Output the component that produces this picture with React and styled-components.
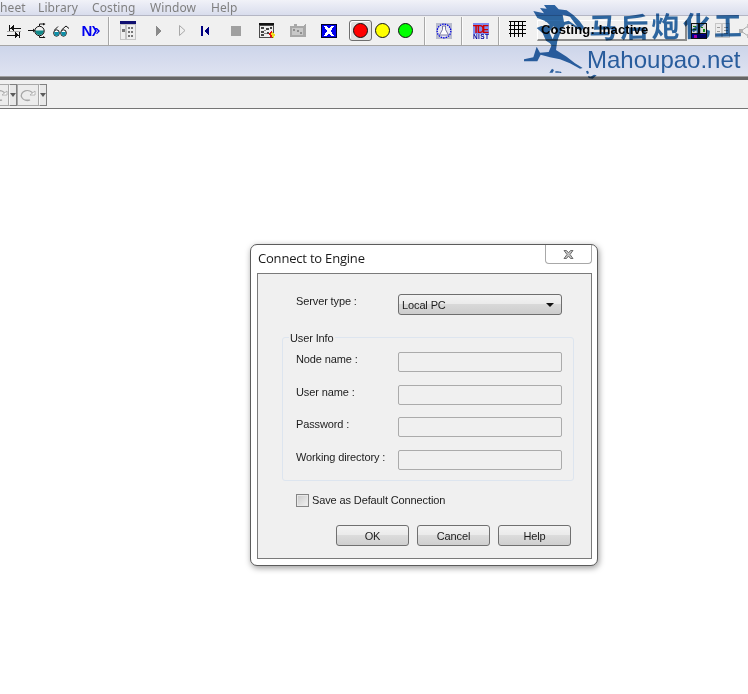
import React from "react";
import styled, { createGlobalStyle } from "styled-components";

const Global = createGlobalStyle`
  html, body { margin: 0; padding: 0; background: #fff; }
  #root { width: 748px; height: 694px; overflow: hidden; position: relative; }
`;

const Page = styled.div`
  width: 748px;
  height: 694px;
  overflow: hidden;
  background: #fff;
  display: flex;
  flex-direction: column;
`;

const MenuBar = styled.div`
  height: 15px;
  flex: none;
  display: flex;
  align-items: center;
  background: linear-gradient(#f1f2f8, #d9dded);
  border-bottom: 1px solid #b4b6c4;
  font: 12px/15px "Noto Sans", sans-serif;
  letter-spacing: 0.1px;
  color: #7f7f7f;
`;
const MenuItem = styled.span`
  flex: none;
  width: ${p => p.$w}px;
  white-space: nowrap;
`;

const Toolbar = styled.div`
  height: 29px;
  flex: none;
  display: flex;
  align-items: stretch;
  background: #f0f0f0;
  border-bottom: 1px solid #a6a6a6;
  padding-left: 2px;
  overflow: hidden;
`;
const Slot = styled.div`
  flex: none;
  width: ${p => p.$w}px;
  padding-bottom: ${p => p.$up || 0}px;
  box-sizing: border-box;
  display: flex;
  align-items: center;
  justify-content: center;
`;
const Sep = styled.div`
  flex: none;
  width: 2px;
  margin: 1px 0 0;
  background: linear-gradient(90deg, #a8a8a8 50%, #fbfbfb 50%);
`;
const PressedButton = styled.div`
  flex: none;
  width: 23px;
  height: 21px;
  margin: 4px 0 0 0;
  box-sizing: border-box;
  border: 1px solid #6e6e6e;
  border-radius: 3px;
  background: #e0e0e0;
  box-shadow: inset 1px 1px 0 #fff;
  display: flex;
  align-items: center;
  justify-content: center;
`;
const CostingBox = styled.div`
  flex: none;
  width: 150px;
  height: 21px;
  margin: 4px 0 0 2px;
  box-sizing: border-box;
  border-right: 2px solid #8c8c8c;
  border-bottom: 2px solid #8c8c8c;
  border-top: 1px solid #fff;
  border-left: 1px solid #fff;
  background: #f0f0f0;
  font: bold 13px/17px "Liberation Sans", sans-serif;
  letter-spacing: 0.15px;
  color: #000;
  padding-left: 3px;
  white-space: nowrap;
`;

const Band = styled.div`
  height: 30px;
  flex: none;
  background: linear-gradient(#cdd5ea, #dfe3f1);
`;
const Rule = styled.div`
  height: 3px;
  flex: none;
  background: #666;
  border-top: 1px solid #a0a0a0;
`;
const SubBar = styled.div`
  height: 28px;
  flex: none;
  background: #f0f0f0;
  border-bottom: 1px solid #757575;
  display: flex;
  align-items: flex-start;
  overflow: hidden;
`;
const SubButton = styled.div`
  flex: none;
  width: ${p => p.$w}px;
  height: 22px;
  margin-top: 4px;
  box-sizing: border-box;
  border: 1px solid #a8a8a8;
  border-left-width: ${p => (p.$clip ? 0 : 1)}px;
  background: #ececec;
  overflow: hidden;
  display: flex;
  align-items: center;
  justify-content: ${p => (p.$clip ? "flex-end" : "center")};
`;
const SubArrow = styled.div`
  flex: none;
  width: 8px;
  height: 22px;
  margin-top: 4px;
  box-sizing: border-box;
  border: 1px solid #808080;
  border-left-color: #f8f8f8;
  background: #e8e8e8;
  display: flex;
  align-items: center;
  justify-content: center;
  &::after {
    content: "";
    border-left: 3px solid transparent;
    border-right: 3px solid transparent;
    border-top: 4px solid #5a5a5a;
  }
`;

const Dialog = styled.div`
  flex: none;
  width: 348px;
  height: 322px;
  margin: 135px 0 0 250px;
  box-sizing: border-box;
  background: #fff;
  border: 1px solid #5c5c5c;
  border-radius: 7px;
  box-shadow: 1px 2px 6px rgba(0, 0, 0, 0.4);
  padding: 0 5px 6px 6px;
  display: flex;
  flex-direction: column;
`;
const TitleBar = styled.div`
  height: 28px;
  flex: none;
  display: flex;
  align-items: flex-start;
  justify-content: space-between;
`;
const Title = styled.div`
  margin: 5px 0 0 1px;
  font: 13px/17px "Open Sans", "Noto Sans", sans-serif;
  letter-spacing: -0.2px;
  color: #1a1a1a;
`;
const CloseButton = styled.div`
  width: 47px;
  height: 19px;
  box-sizing: border-box;
  border: 1px solid #a8a8a8;
  border-top: none;
  border-radius: 0 0 4px 4px;
  background: #fff;
  display: flex;
  align-items: center;
  justify-content: center;
`;
const Panel = styled.div`
  flex: 1;
  box-sizing: border-box;
  border: 1px solid #7a7a7a;
  background: #f0f0f0;
  padding: 20px 20px 0 0;
  display: flex;
  flex-direction: column;
  font: 11px/14px "Liberation Sans", sans-serif;
  letter-spacing: -0.12px;
  color: #1c1c1c;
`;
const ServerRow = styled.div`
  display: grid;
  grid-template-columns: 102px 164px;
  height: 21px;
  padding-left: 38px;
`;
const Label = styled.div`
  white-space: nowrap;
`;
const SelectBox = styled.div`
  box-sizing: border-box;
  height: 21px;
  border: 1px solid #6e6e6e;
  border-radius: 3px;
  background: linear-gradient(#f3f3f3 0%, #ebebeb 45%, #d8d8d8 50%, #cdcdcd 100%);
  display: flex;
  align-items: center;
  justify-content: space-between;
  padding: 1px 7px 0 3px;
  &::after {
    content: "";
    border-left: 4px solid transparent;
    border-right: 4px solid transparent;
    border-top: 4px solid #111;
  }
`;
const Group = styled.div`
  position: relative;
  box-sizing: border-box;
  width: 292px;
  height: 144px;
  margin: 22px 0 0 24px;
  padding: 14px 0 0 13px;
  border: 1px solid #dde5ef;
  border-radius: 3px;
`;
const Legend = styled.div`
  position: absolute;
  top: -7px;
  left: 6px;
  padding: 0 1px;
  background: #f0f0f0;
`;
const Fields = styled.div`
  display: grid;
  grid-template-columns: 102px 164px;
  grid-template-rows: 33px 32px 33px 20px;
`;
const Input = styled.div`
  box-sizing: border-box;
  height: 20px;
  border: 1px solid #ababab;
  border-radius: 2px;
  background: #f0f0f0;
`;
const CheckRow = styled.label`
  display: flex;
  align-items: flex-start;
  gap: 3px;
  margin: 13px 0 0 38px;
  height: 13px;
  line-height: 12px;
  white-space: nowrap;
`;
const CheckBox = styled.span`
  flex: none;
  width: 13px;
  height: 13px;
  box-sizing: border-box;
  border: 1px solid #858585;
  background: linear-gradient(135deg, #c9c9c9, #f2f2f2);
  box-shadow: inset 0 0 0 1px #e8e8e8;
`;
const Buttons = styled.div`
  display: flex;
  justify-content: flex-end;
  gap: 8px;
  margin-top: 18px;
`;
const Button = styled.div`
  width: 73px;
  height: 21px;
  box-sizing: border-box;
  border: 1px solid #707070;
  border-radius: 3px;
  background: linear-gradient(#f3f3f3 0%, #ebebeb 45%, #dcdcdc 50%, #cfcfcf 100%);
  display: flex;
  align-items: center;
  justify-content: center;
`;

const Watermark = styled.div`
  position: absolute;
  top: 0;
  left: 520px;
  width: 228px;
  height: 82px;
  color: #306ba8;
  pointer-events: none;
  mix-blend-mode: multiply;
`;
const HorseSvg = styled.svg`
  position: absolute;
  top: 0;
  left: 0;
`;
const BrandCn = styled.div`
  position: absolute;
  top: 7px;
  left: 69px;
  font: 700 28px/36px "Noto Sans CJK SC", sans-serif;
  letter-spacing: 3.2px;
  white-space: nowrap;
  transform: rotate(-1deg);
`;
const BrandEn = styled.div`
  position: absolute;
  top: 46px;
  left: 67px;
  font: 24px/28px "Liberation Sans", sans-serif;
  white-space: nowrap;
`;

const Px = ({ w, h, children }) => (
  <svg width={w} height={h} viewBox={`0 0 ${w} ${h}`} shapeRendering="crispEdges">{children}</svg>
);

const SwapIcon = () => (
  <Px w={14} h={14}>
    <path d="M2 1h1v6H2zM0 12h12v-1H0z" fill="#111" />
    <path d="M3 3.500h11v1H3z" fill="#111" />
    <path d="M3 4L7 1v6z" fill="#111" />
    <path d="M12 8h1v6h-1zM8 8l4 3-4 3z" fill="#111" />
    <path d="M0 7h14v.5H0z" fill="#aaa" />
  </Px>
);
const TowerIcon = () => (
  <svg width="18" height="15" viewBox="0 0 18 15">
    <path d="M7 7.500a4.500 4.500 0 0 0 9 0z" fill="#0f8a8a" />
    <circle cx="11.500" cy="8" r="4.700" fill="none" stroke="#111" />
    <path d="M0 7.500h5M11.500 3V1h5M11.500 13v1.500h5" fill="none" stroke="#111" />
    <path d="M5 5.500L7 7.500 5 9.500zM15 0l2.500 1L15 2.500zM15 13l2.500 1.500L15 15.500z" fill="#111" />
  </svg>
);
const GlassesIcon = () => (
  <svg width="17" height="12" viewBox="0 0 17 12">
    <ellipse cx="3.500" cy="8" rx="2.800" ry="3.200" fill="#fff" stroke="#111" />
    <ellipse cx="10.500" cy="8" rx="2.800" ry="3.200" fill="#fff" stroke="#111" />
    <path d="M1 7h5l-.6 3.800H2zM8 7h5l-.6 3.800H9z" fill="#0d8fa8" />
    <path d="M1.500 5L5 1.500M8.500 5L13 1l3 2.500" fill="none" stroke="#111" />
  </svg>
);
const NIcon = styled.span`
  display: flex;
  align-items: center;
  font: bold 15px/15px "Liberation Sans", sans-serif;
  color: #0000f0;
`;
const SheetIcon = () => (
  <Px w={16} h={19}>
    <path d="M0 0h16v19H0z" fill="#c4c4c4" />
    <path d="M0 0h16v3H0z" fill="#101070" />
    <path d="M1 4h4v14H1zM7 4h8v14H7z" fill="#efefef" />
    <path d="M2 8h3v3H2zM8 6h2v2H8zM11 6h2v2h-2zM8 10h2v2H8zM11 10h2v2h-2zM8 14h2v2H8zM11 14h2v2h-2z" fill="#777" />
  </Px>
);
const PlayIcon = () => <Px w={6} h={10}><path d="M0 0l6 5-6 5z" fill="#8a8a8a" /></Px>;
const HollowPlayIcon = () => (
  <svg width="7" height="11" viewBox="0 0 7 11"><path d="M.5.5l5.500 5-5.500 5z" fill="none" stroke="#a8a8a8" /></svg>
);
const BackIcon = () => (
  <Px w={9} h={10}><path d="M0 0h2v10H0zM8 0v10L3 5z" fill="#000080" /></Px>
);
const StopIcon = () => <Px w={10} h={10}><path d="M0 0h10v10H0z" fill="#a0a0a0" /></Px>;
const CheckSheetIcon = () => (
  <Px w={16} h={16}>
    <path d="M0 0h15v15H0z" fill="#4a4a4a" />
    <path d="M0 0h15v2H0z" fill="#111" />
    <path d="M1 3h13v11H1z" fill="#ececec" />
    <path d="M2 4h3v2H2zM7 5h3v2H7zM11 4h2v2h-2zM2 8h3v2H2zM8 9h2v2H8zM2 11h3v2H2z" fill="#444" />
    <path d="M5 7h2v1H5zM5 10h3v1H5z" fill="#888" />
    <path d="M9 11l3-3 2 2-1 1 2 2-3 2-1-2z" fill="#e81010" />
    <path d="M12 10l2-1 2 3-1 3-2-1z" fill="#f0e020" />
  </Px>
);
const DisabledIcon = () => (
  <Px w={16} h={13}>
    <path d="M0 2h4V0h3v2h6l3-2v13H0z" fill="#a8a8a8" />
    <path d="M2 4h11v7H2z" fill="#c8c8c8" />
    <path d="M3 5h2v2H3zM7 6h2v2H7zM10 8h2v2h-2z" fill="#8e8e8e" />
  </Px>
);
const XBoxIcon = () => (
  <Px w={16} h={14}>
    <path d="M0 0h16v14H0z" fill="#00002a" />
    <path d="M1 1h14v12H1z" fill="#0000f0" />
    <path d="M3 2h3l2 3 2-3h3l-3 5 3 5h-3L8 9l-2 3H3l3-5z" fill="#fff" />
  </Px>
);
const Lamp = styled.span`
  display: block;
  width: 15px;
  height: 15px;
  box-sizing: border-box;
  border: 1px solid #111;
  border-radius: 50%;
  background: ${p => p.$c};
`;
const FlaskIcon = () => (
  <svg width="16" height="16" viewBox="0 0 16 16">
    <rect width="16" height="16" fill="#b9bccd" />
    <circle cx="8" cy="8" r="6.800" fill="#e6e6f0" stroke="#0000e0" strokeWidth="1.300" strokeDasharray="1.500 1" />
    <path d="M6.500 3h3v3.500L12.500 12h-9L6.500 6.500z" fill="#fff" stroke="#5a5a8a" strokeWidth=".8" />
  </svg>
);
const TdeIcon = () => (
  <svg width="16" height="16" viewBox="0 0 16 16">
    <rect width="16" height="11" fill="#7f8df0" />
    <text x="0" y="9.500" fontFamily="Liberation Sans" fontWeight="700" fontSize="10" fill="#d00000" textLength="16">TDE</text>
    <text x="0" y="16" fontFamily="Liberation Sans" fontWeight="700" fontSize="6.500" fill="#0000a0" textLength="16">NIST</text>
  </svg>
);
const GridIcon = () => (
  <Px w={17} h={16}>
    <path d="M0 0h17v1H0zM0 4h17v1H0zM0 8h17v1H0zM0 12h17v1H0zM1 0h1v16H1zM5 0h1v16H5zM9 0h1v16H9zM13 0h1v16h-1z" fill="#000" />
  </Px>
);
const ChartIcon = () => (
  <Px w={16} h={16}>
    <path d="M0 0h16v16H0z" fill="#141414" />
    <path d="M1 1h6v9H1zM9 1h6v9H9z" fill="#d8d8d8" />
    <path d="M2 3h3v1H2zM2 6h3v1H2zM10 4h2v1h-2zM12 6h2v3h-2z" fill="#108810" />
    <path d="M1 11h14v4H1z" fill="#000090" />
    <path d="M3 12h3v3H3z" fill="#a000a0" />
  </Px>
);
const GrayTableIcon = () => (
  <Px w={15} h={15}>
    <path d="M0 0h15v15H0z" fill="#c6c6c6" />
    <path d="M1 1h5v13H1zM8 1h6v13H8z" fill="#ececec" />
    <path d="M2 4h3v1H2zM2 8h3v1H2zM9 4h4v1H9zM9 7h4v1H9zM9 10h4v1H9z" fill="#9a9a9a" />
  </Px>
);
const NetIcon = () => (
  <svg width="14" height="14" viewBox="0 0 14 14">
    <path d="M2 7L9 2M2 7l7 5" stroke="#aaa" fill="none" />
    <rect x="0" y="5" width="4" height="4" fill="#b0b0b0" />
    <rect x="8" y="0" width="4" height="4" fill="#c0c0c0" />
    <rect x="8" y="10" width="4" height="4" fill="#c0c0c0" />
  </svg>
);
const CircleArrow = () => (
  <svg width="16" height="14" viewBox="0 0 16 14" style={{ flex: "none" }}>
    <path d="M13 6a6 5 0 1 0-3 6H5" fill="none" stroke="#a6a6a6" strokeWidth="1.200" />
    <path d="M10 7h5V3z" fill="#fff" stroke="#a6a6a6" strokeWidth=".8" />
  </svg>
);
const CloseGlyph = () => (
  <svg width="13" height="11" viewBox="0 0 13 11">
    <path d="M2 1.500h2.500l2 2.300 2-2.300H11L8 5.500l3 4H8.500l-2-2.500-2 2.500H2l3-4z" fill="#c4c4c4" stroke="#6e6e6e" />
  </svg>
);

const Horse = () => (
  <HorseSvg width="90" height="82" viewBox="0 0 270 246">
    <g fill="#306ba8">
      <path d="M40 33L72 40 60 24 80 26 72 15 104 15 116 28 140 31 160 45 178 62 192 82 184 92 168 84 150 72 135 74 122 95 112 122 100 145 90 130 78 122 68 100 50 84 64 78 86 80 74 62 52 54z" />
      <path d="M98 128L114 108 108 150 140 170 165 190 188 204 180 206 150 190 120 178 90 172 62 164 52 184 12 184 12 178 40 172 50 140 60 158 86 156z" />
      <path d="M88 218l8-12 6 4-4 8zM106 214h10l2 4h-12zM118 214l6 2v3h-6zM198 214l6-2 3 8-6 2zM204 228l8 2 10-6 8 2-12 10-12-2z" />
    </g>
    <g fill="#fff">
      <path d="M128 44l22 6 22 30-26-18-14 4z" />
      <path d="M88 96l12-18 8 14-10 26z" />
      <path d="M58 60l22 6 10 10-24-2z" />
    </g>
  </HorseSvg>
);

export default function App() {
  return (
    <Page>
      <Global />
      <MenuBar>
        <MenuItem $w={38}>heet</MenuItem>
        <MenuItem $w={54}>Library</MenuItem>
        <MenuItem $w={58}>Costing</MenuItem>
        <MenuItem $w={61}>Window</MenuItem>
        <MenuItem $w={40}>Help</MenuItem>
      </MenuBar>
      <Toolbar>
        <Slot $w={24}><SwapIcon /></Slot>
        <Slot $w={22}><TowerIcon /></Slot>
        <Slot $w={26}><GlassesIcon /></Slot>
        <Slot $w={34}>
          <NIcon>
            N
            <svg width="8" height="10" viewBox="0 0 8 10">
              <path d="M0 0h2l3 5-3 5H0l3-5zM3 2h2l3 3-3 3H4l2-3z" fill="#0000f0" />
            </svg>
          </NIcon>
        </Slot>
        <Sep />
        <Slot $w={36}><SheetIcon /></Slot>
        <Slot $w={26}><PlayIcon /></Slot>
        <Slot $w={21}><HollowPlayIcon /></Slot>
        <Slot $w={24}><BackIcon /></Slot>
        <Slot $w={38}><StopIcon /></Slot>
        <Slot $w={24}><CheckSheetIcon /></Slot>
        <Slot $w={38}><DisabledIcon /></Slot>
        <Slot $w={24}><XBoxIcon /></Slot>
        <Slot $w={8} />
        <PressedButton><Lamp $c="#ff0000" /></PressedButton>
        <Slot $w={21}><Lamp $c="#ffff00" /></Slot>
        <Slot $w={24}><Lamp $c="#00ff00" /></Slot>
        <Slot $w={7} />
        <Sep />
        <Slot $w={35}><FlaskIcon /></Slot>
        <Sep />
        <Slot $w={35}><TdeIcon /></Slot>
        <Sep />
        <Slot $w={35} $up={3}><GridIcon /></Slot>
        <CostingBox>Costing: Inactive</CostingBox>
        <Slot $w={23}><ChartIcon /></Slot>
        <Slot $w={25}><GrayTableIcon /></Slot>
        <Slot $w={22}><NetIcon /></Slot>
      </Toolbar>
      <Band />
      <Rule />
      <SubBar>
        <SubButton $w={9} $clip><CircleArrow /></SubButton>
        <SubArrow />
        <SubButton $w={22}><CircleArrow /></SubButton>
        <SubArrow />
      </SubBar>
      <Dialog>
        <TitleBar>
          <Title>Connect to Engine</Title>
          <CloseButton><CloseGlyph /></CloseButton>
        </TitleBar>
        <Panel>
          <ServerRow>
            <Label>Server type :</Label>
            <SelectBox>Local PC</SelectBox>
          </ServerRow>
          <Group>
            <Legend>User Info</Legend>
            <Fields>
              <Label>Node name :</Label>
              <Input />
              <Label>User name :</Label>
              <Input />
              <Label>Password :</Label>
              <Input />
              <Label>Working directory :</Label>
              <Input />
            </Fields>
          </Group>
          <CheckRow>
            <CheckBox />
            Save as Default Connection
          </CheckRow>
          <Buttons>
            <Button>OK</Button>
            <Button>Cancel</Button>
            <Button>Help</Button>
          </Buttons>
        </Panel>
      </Dialog>
      <Watermark>
        <Horse />
        <BrandCn>马后炮化工</BrandCn>
        <BrandEn>Mahoupao.net</BrandEn>
      </Watermark>
    </Page>
  );
}
